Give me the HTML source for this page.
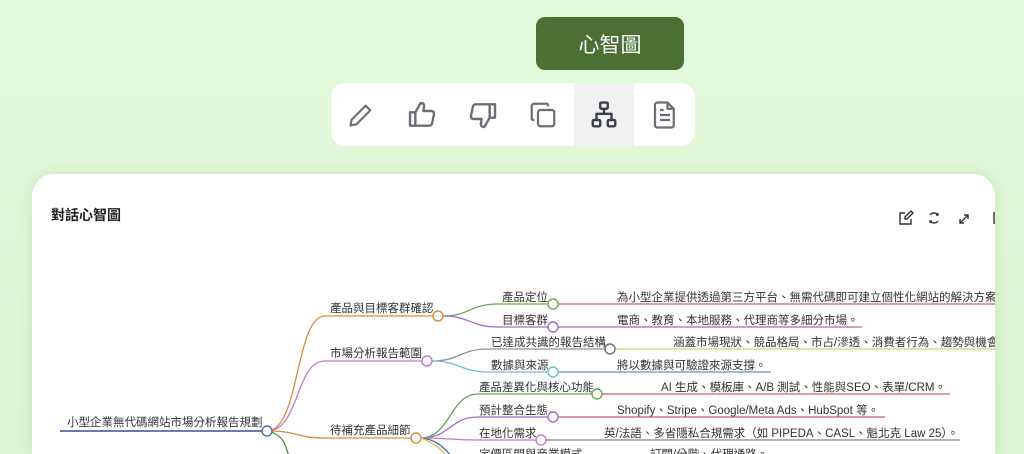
<!DOCTYPE html>
<html><head><meta charset="utf-8"><style>
*{margin:0;padding:0;box-sizing:border-box}
html{width:1024px;height:454px;overflow:hidden}
body{width:1024px;height:454px;overflow:hidden;background:linear-gradient(180deg,#e3f8da 0%,#dcf5d2 100%);font-family:"Liberation Sans","Noto Sans CJK TC",sans-serif;position:relative}
.tip{position:absolute;left:536px;top:17px;width:148px;height:53px;background:#4a7034;border-radius:9px;color:#fff;font-size:21px;display:flex;align-items:center;justify-content:center}
.bar{position:absolute;left:331px;top:83px;width:364px;height:63px;background:#fff;border-radius:14px;display:flex;overflow:hidden}
.bar div{width:61px;height:63px;display:flex;align-items:center;justify-content:center}
.bar .on{background:#f1f1f4}
.card{position:absolute;left:32px;top:174px;width:963px;height:280px;background:#fff;border-radius:22px 22px 0 0;box-shadow:0 0 14px rgba(80,130,60,.15);overflow:hidden}
.ttl{position:absolute;left:19px;top:31px;font-size:14px;font-weight:bold;color:#222}
svg text{font-family:"Liberation Sans","Noto Sans CJK TC",sans-serif;font-size:11.5px;fill:#333}
</style></head><body>
<div class="tip">心智圖</div>
<div class="bar">
<div><svg width="28" height="28" viewBox="0 0 24 24" fill="none" stroke="#6b6e75" stroke-width="1.8" stroke-linejoin="round"><path d="M3 21l1-5L16 4l4 4L8 20z"/></svg></div>
<div><svg width="32" height="32" viewBox="0 0 24 24" fill="none" stroke="#6b6e75" stroke-width="1.8" stroke-linejoin="round"><path d="M3 10h4v10H3zM7 10l4-7c2 0 3 1 2.5 3L13 9h6c1.5 0 2.2 1.2 2 2.5l-1.5 7c-.3 1-1 1.5-2 1.5H7"/></svg></div>
<div><svg width="32" height="32" viewBox="0 0 24 24" fill="none" stroke="#6b6e75" stroke-width="1.8" stroke-linejoin="round" transform="rotate(180)"><path d="M3 10h4v10H3zM7 10l4-7c2 0 3 1 2.5 3L13 9h6c1.5 0 2.2 1.2 2 2.5l-1.5 7c-.3 1-1 1.5-2 1.5H7"/></svg></div>
<div><svg width="30" height="30" viewBox="0 0 24 24" fill="none" stroke="#6b6e75" stroke-width="1.8" stroke-linejoin="round"><rect x="8" y="8" width="13" height="13" rx="2"/><path d="M16 5V4a1 1 0 0 0-1-1H5a2 2 0 0 0-2 2v10a1 1 0 0 0 1 1h1"/></svg></div>
<div class="on"><svg width="30" height="30" viewBox="0 0 24 24" fill="none" stroke="#3a3f4a" stroke-width="1.9" stroke-linejoin="round"><rect x="9" y="2" width="6" height="5" rx="1"/><rect x="3" y="16" width="6" height="5" rx="1"/><rect x="15" y="16" width="6" height="5" rx="1"/><path d="M12 7v4M6 16v-5h12v5"/></svg></div>
<div><svg width="30" height="30" viewBox="0 0 24 24" fill="none" stroke="#6b6e75" stroke-width="1.8" stroke-linejoin="round"><path d="M6 2h8l5 5v13a2 2 0 0 1-2 2H6a2 2 0 0 1-2-2V4a2 2 0 0 1 2-2zM14 2v5h5M8 12h8M8 16h8M8 8h3"/></svg></div>
</div>
<div class="card">
<div class="ttl">對話心智圖</div>
<svg style="position:absolute;left:866px;top:36px" width="100" height="16" viewBox="0 0 100 16" fill="none" stroke="#333" stroke-width="1.4">
<path d="M7 3H2v11h11V9M13 1l2 2-6 6H7V7z"/>
<path d="M32 5a5 5 0 0 1 8 0M40 3v2h-2M40 11a5 5 0 0 1-8 0M32 13v-2h2"/>
<path d="M62 13l8-8M62 9v4h4M70 9V5h-4"/>
<path d="M98 3h-2v10h2"/>
</svg>
<svg style="position:absolute;left:-32px;top:-174px" width="1024" height="454" fill="none" stroke-width="1.3">
<text x="67" y="426">小型企業無代碼網站市場分析報告規劃</text>
<path d="M60 431H262" stroke="#4a6fa0" stroke-width="1.8"/>
<path d="M267 431C300 431 295 316 325 316H433" stroke="#e08a3c"/>
<path d="M267 431C300 431 295 361 325 361H422" stroke="#c878d0"/>
<path d="M267 431C300 431 295 438 325 438H411" stroke="#e08a3c"/>
<path d="M267 431C285 435 285 445 290 460" stroke="#4a9a40"/>
<text x="330" y="312">產品與目標客群確認</text>
<text x="330" y="357">市場分析報告範圍</text>
<text x="330" y="434">待補充產品細節</text>
<path d="M443 316C470 316 470 304 498 304H548" stroke="#6aa84f"/>
<path d="M443 316C470 316 470 327 498 327H548" stroke="#9b6fd0"/>
<path d="M432 361C460 361 460 349 488 349H605" stroke="#909090"/>
<path d="M432 361C460 361 460 372 488 372H548" stroke="#6ec0d0"/>
<path d="M421 438C450 438 450 394 478 394H592" stroke="#6aa84f"/>
<path d="M421 438C450 438 450 417 478 417H548" stroke="#9b6fd0"/>
<path d="M421 438C450 438 450 440 478 440H536" stroke="#c878d0"/>
<path d="M421 438C440 440 445 450 455 460" stroke="#4a6fa0"/>
<path d="M421 438C440 445 445 455 450 460" stroke="#d8c860"/>
<text x="502" y="301">產品定位</text>
<text x="502" y="324">目標客群</text>
<text x="491" y="346">已達成共識的報告結構</text>
<text x="491" y="369">數據與來源</text>
<text x="479" y="391">產品差異化與核心功能</text>
<text x="479" y="414">預計整合生態</text>
<text x="479" y="437">在地化需求</text>
<text x="479" y="458">定價區間與商業模式</text>
<path d="M558 304H995" stroke="#d06060"/>
<path d="M558 327H862" stroke="#c060a0"/>
<path d="M615 349H995" stroke="#d8d070"/>
<path d="M558 372H771" stroke="#6a90c0"/>
<path d="M602 394H950" stroke="#d06060"/>
<path d="M558 417H885" stroke="#c06070"/>
<path d="M546 440H960" stroke="#808080"/>
<text x="617" y="301">為小型企業提供透過第三方平台、無需代碼即可建立個性化網站的解決方案</text>
<text x="617" y="324">電商、教育、本地服務、代理商等多細分市場。</text>
<text x="673" y="346">涵蓋市場現狀、競品格局、市占/滲透、消費者行為、趨勢與機會</text>
<text x="617" y="369">將以數據與可驗證來源支撐。</text>
<text x="661" y="391">AI 生成、模板庫、A/B 測試、性能與SEO、表單/CRM。</text>
<text x="617" y="414">Shopify、Stripe、Google/Meta Ads、HubSpot 等。</text>
<text x="604" y="437">英/法語、多省隱私合規需求（如 PIPEDA、CASL、魁北克 Law 25）。</text>
<text x="650" y="458">訂閱/分階、代理通路。</text>
<g fill="#fff" stroke-width="1.4">
<circle cx="267" cy="431" r="5" stroke="#4a6fa0"/>
<circle cx="438" cy="316" r="5" stroke="#e08a3c"/>
<circle cx="427" cy="361" r="5" stroke="#c878d0"/>
<circle cx="416" cy="438" r="5" stroke="#e08a3c"/>
<circle cx="553" cy="304" r="5" stroke="#6aa84f"/>
<circle cx="553" cy="327" r="5" stroke="#9b6fd0"/>
<circle cx="610" cy="349" r="5" stroke="#707070"/>
<circle cx="553" cy="372" r="5" stroke="#6ec0d0"/>
<circle cx="597" cy="394" r="5" stroke="#6aa84f"/>
<circle cx="553" cy="417" r="5" stroke="#9b6fd0"/>
<circle cx="541" cy="440" r="5" stroke="#c878d0"/>
</g>
</svg>
</div>
</body></html>
